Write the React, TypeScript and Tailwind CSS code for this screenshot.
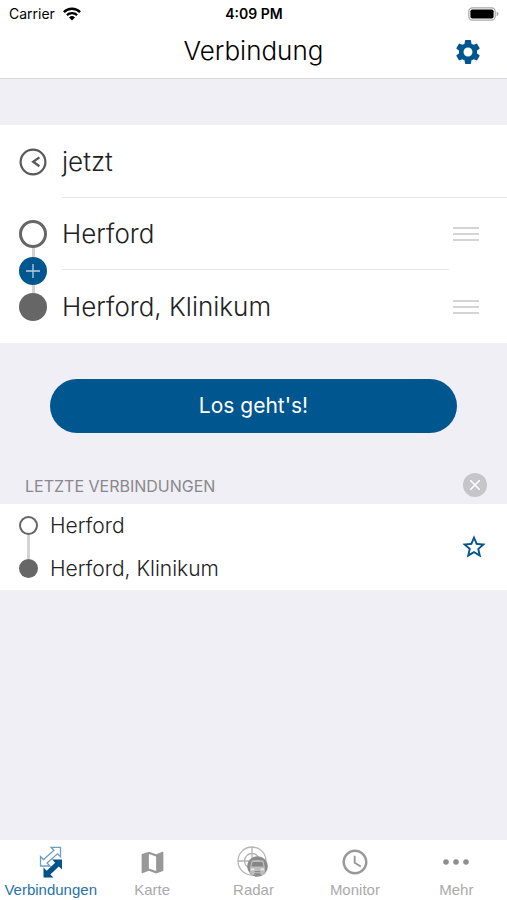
import type { ReactNode } from 'react'
import { MdAccessTime, MdMap, MdSettings, MdStarBorder } from 'react-icons/md'

function WifiIcon() {
  return (
    <svg width="18" height="14" viewBox="0 0 18 14" aria-hidden="true">
      <g fill="none" stroke="#000" strokeWidth="2.4">
        <path d="M0.9 5.1a11.6 11.6 0 0 1 16.2 0" />
        <path d="M3.9 8.2a7.3 7.3 0 0 1 10.2 0" />
      </g>
      <path d="M6 10.4a4.3 4.3 0 0 1 6 0L9 13.6z" fill="#000" />
    </svg>
  )
}

function BatteryIcon() {
  return (
    <svg width="31" height="14" viewBox="0 0 31 14" aria-hidden="true">
      <rect x="0.8" y="0.8" width="26.4" height="12.4" rx="3.6" fill="#fff" stroke="#a9a9a9" strokeWidth="1.2" />
      <rect x="2.4" y="2.4" width="23.2" height="9.2" rx="1.8" fill="#000" />
      <path d="M28.6 4.8q2 .6 2 2.2t-2 2.2z" fill="#a9a9a9" />
    </svg>
  )
}

function TimeIcon() {
  return (
    <svg width="28" height="28" viewBox="0 0 28 28" fill="none" stroke="#585858" aria-hidden="true">
      <circle cx="14" cy="14" r="12.4" strokeWidth="2.2" />
      <path d="M20.4 9.4L14.2 13.8l6.2 4.4" strokeWidth="2.3" />
    </svg>
  )
}

function HandleIcon() {
  return (
    <svg width="28" height="16" viewBox="0 0 28 16" stroke="#c6c6c8" strokeWidth="1.7" aria-hidden="true">
      <path d="M1 2h26M1 8h26M1 14h26" />
    </svg>
  )
}

function ArrowsIcon() {
  return (
    <svg width="24" height="33" viewBox="0 0 24 33" aria-hidden="true">
      <path
        d="M12 1.3h9.5v9.5l-3-3L8 17l3 3H1.5v-9.5l3 3L15 4.3z"
        fill="#fff"
        stroke="#6d9dc4"
        strokeWidth="1.3"
      />
      <path
        d="M13 13.6h10v10l-3.2-3.2-8.5 8 3.2 3.2h-10v-10l3.2 3.2 8.5-8z"
        fill="#00528a"
      />
    </svg>
  )
}

function RadarIcon() {
  return (
    <svg width="32" height="32" viewBox="0 0 32 32" aria-hidden="true">
      <g fill="none" stroke="#b4b4b4" strokeWidth="1.3">
        <circle cx="15" cy="15" r="14" />
        <circle cx="15" cy="15" r="7.5" />
        <path d="M15 1v28M1 15h28" />
      </g>
      <circle cx="20.5" cy="20.5" r="10.3" fill="#8b8b8b" />
      <path d="M14.6 14.6q5.9-1.2 11.8 0l1.6 7.6v5H13v-5z" fill="#bcbcbc" />
      <path d="M15.6 16h9.8l1 4.6H14.6z" fill="#858585" />
      <path d="M14 23.4h3.4M23.6 23.4H27" stroke="#ececec" strokeWidth="1.6" />
      <path d="M17.8 25.6h5.4" stroke="#8b8b8b" strokeWidth="1.2" />
      <path d="M14 27h3.4v2H14zM23.6 27H27v2h-3.4z" fill="#bcbcbc" />
    </svg>
  )
}

function MoreIcon() {
  return (
    <svg width="28" height="28" viewBox="0 0 28 28" fill="#8e8e8e" aria-hidden="true">
      <circle cx="4" cy="14" r="2.8" />
      <circle cx="14" cy="14" r="2.8" />
      <circle cx="24" cy="14" r="2.8" />
    </svg>
  )
}

const tabs: { label: string; icon: ReactNode; active?: boolean }[] = [
  { label: 'Verbindungen', icon: <ArrowsIcon />, active: true },
  { label: 'Karte', icon: <MdMap size={29} /> },
  { label: 'Radar', icon: <RadarIcon /> },
  { label: 'Monitor', icon: <MdAccessTime size={30} /> },
  { label: 'Mehr', icon: <MoreIcon /> },
]

export default function App() {
  return (
    <div className="flex min-h-screen flex-col bg-[#f0eff5] font-['Inter','Liberation_Sans',sans-serif] text-[#222]">
      <header className="border-b border-[#d9d9dc] bg-white text-black">
        {/* Status bar */}
        <div className="grid h-[27px] grid-cols-3 items-center pr-2 pl-[9px] text-[14px]">
          <div className="flex items-center gap-2">
            <span>Carrier</span>
            <WifiIcon />
          </div>
          <span className="text-center font-semibold">4:09 PM</span>
          <div className="flex justify-end">
            <BatteryIcon />
          </div>
        </div>
        <div className="grid h-[51px] grid-cols-[1fr_auto_1fr] items-start px-6">
          <h1 className="col-start-2 text-[26px] leading-[48px] font-light">Verbindung</h1>
          <button aria-label="Einstellungen" className="mt-[10px] justify-self-end text-[#00568f]">
            <MdSettings size={30} />
          </button>
        </div>
      </header>

      <main className="flex-1">
        {/* Search form */}
        <section className="mt-[46px] bg-white text-[26px] font-light">
          <div className="flex h-[73px] gap-[15px] pl-[19px]">
            <span className="flex items-center">
              <TimeIcon />
            </span>
            <button className="flex-1 border-b border-[#e6e6e8] text-left">jetzt</button>
          </div>
          <div className="flex gap-[15px] pl-[19px]">
            <div className="flex w-7 flex-col items-center py-[22px]">
              <span className="size-7 rounded-full border-[3px] border-[#666]" />
              <span className="w-[3px] flex-1 bg-[#d4d4d4]" />
              <button
                aria-label="Zwischenhalt"
                className="flex size-7 items-center justify-center rounded-full bg-[#00568f]"
              >
                <svg width="14" height="14" viewBox="0 0 14 14" stroke="#b9d0e1" strokeWidth="1.3">
                  <path d="M7 0v14M0 7h14" />
                </svg>
              </button>
              <span className="w-[3px] flex-1 bg-[#d4d4d4]" />
              <span className="size-7 rounded-full bg-[#666]" />
            </div>
            <div className="flex-1">
              <button className="block h-[72px] w-full border-b border-[#e6e6e8] text-left">Herford</button>
              <button className="block h-[73px] w-full text-left">Herford, Klinikum</button>
            </div>
            <div className="-ml-3 flex flex-col pr-[27px]">
              <span className="flex h-[72px] items-center">
                <HandleIcon />
              </span>
              <span className="flex h-[73px] items-center">
                <HandleIcon />
              </span>
            </div>
          </div>
        </section>

        <div className="px-[50px] pt-9">
          <button className="h-[54px] w-full rounded-full bg-[#00568f] text-[21px] text-white">Los geht's!</button>
        </div>

        {/* Recent connections */}
        <section className="mt-10">
          <div className="flex h-[31px] items-start justify-between pr-5 pl-[25px]">
            <h2 className="text-[16px] leading-[26px] text-[#88888d]">LETZTE VERBINDUNGEN</h2>
            <button
              aria-label="Löschen"
              className="flex size-6 items-center justify-center rounded-full bg-[#c6c6ca]"
            >
              <svg width="10" height="10" viewBox="0 0 10 10" stroke="#fff" strokeWidth="1.5">
                <path d="M0 0l10 10M10 0L0 10" />
              </svg>
            </button>
          </div>
          <div className="flex h-[86px] items-center bg-white pr-[19px] pl-[19px]">
            <div className="flex h-[62px] w-[19px] flex-col items-center">
              <span className="size-[19px] rounded-full border-2 border-[#666]" />
              <span className="w-[3px] flex-1 bg-[#d4d4d4]" />
              <span className="size-[19px] rounded-full bg-[#666]" />
            </div>
            <div className="flex-1 pl-3 text-[21px] leading-[43px] font-light">
              <p>Herford</p>
              <p>Herford, Klinikum</p>
            </div>
            <button aria-label="Favorit" className="text-[#00568f]">
              <MdStarBorder size={28} />
            </button>
          </div>
        </section>
      </main>

      <nav className="grid h-[60px] grid-cols-5 bg-white font-['Liberation_Sans',sans-serif] text-[15px]">
        {tabs.map((tab) => (
          <a
            key={tab.label}
            href="#"
            className={`flex flex-col items-center ${tab.active ? 'text-[#2872a8]' : 'text-[#989898]'}`}
          >
            <span className="flex h-[42px] items-center pt-[2px]">{tab.icon}</span>
            <span className={`leading-4 ${tab.active ? '' : 'text-[#aaa]'}`}>{tab.label}</span>
          </a>
        ))}
      </nav>
    </div>
  )
}
